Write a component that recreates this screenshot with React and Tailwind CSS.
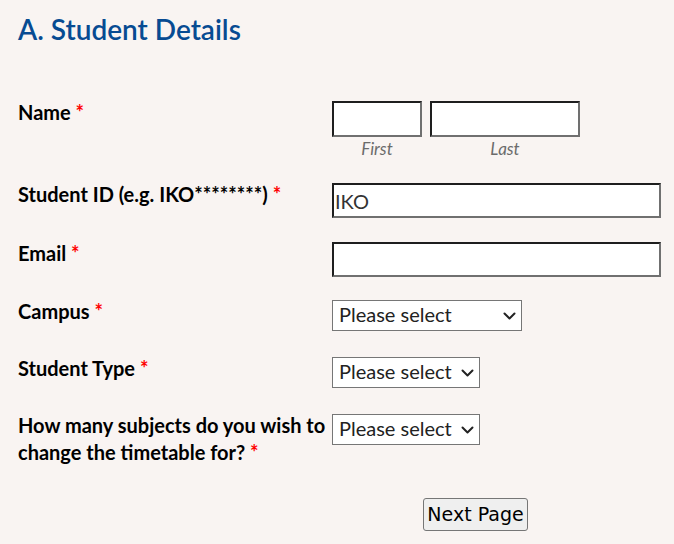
import React from "react";

const font = { fontFamily: "Lato, 'Noto Sans', sans-serif" };

function Req() {
  return <span className="text-[#ff0000] font-bold"> *</span>;
}

function Chevron() {
  return (
    <svg className="absolute right-[6px] top-1/2 -translate-y-1/2 pointer-events-none" width="13" height="8" viewBox="0 0 13 8">
      <path d="M1.5 1.5 L6.5 6.5 L11.5 1.5" fill="none" stroke="#222" strokeWidth="2" strokeLinecap="round" strokeLinejoin="round" />
    </svg>
  );
}

function Select({ w }) {
  return (
    <div className={`relative h-[31px] ${w}`}>
      <select className="appearance-none w-full h-full bg-white border border-[#767676] pl-[6px] pb-[3px] text-[20px] leading-[24px] text-[#222] outline-none">
        <option>Please select</option>
      </select>
      <Chevron />
    </div>
  );
}

const inputCls =
  "bg-white border-2 border-t-[#1e1e1e] border-l-[#1e1e1e] border-b-[#707070] border-r-[#707070] outline-none text-[20px] text-[#333] px-[1px]";

function Label({ children }) {
  return (
    <div className="w-[314px] shrink-0 font-bold text-[20px] leading-[27px] text-black -mt-[2px]">
      {children}
    </div>
  );
}

export default function App() {
  return (
    <div className="min-h-[544px] bg-[#f9f4f2] pl-[18px] pt-[12px]" style={font}>
      <h2 className="text-[28px] leading-[34px] font-semibold text-[#074b92]">A. Student Details</h2>

      <div className="mt-[55px] flex">
        <Label>
          Name<Req />
        </Label>
        <div className="flex gap-[8px]">
          <div className="flex flex-col items-center">
            <input className={`${inputCls} w-[90px] h-[36px]`} />
            <span className="italic text-[17px] leading-[24px] text-[#6b6b6b]">First</span>
          </div>
          <div className="flex flex-col items-center">
            <input className={`${inputCls} w-[150px] h-[36px]`} />
            <span className="italic text-[17px] leading-[24px] text-[#6b6b6b]">Last</span>
          </div>
        </div>
      </div>

      <div className="mt-[22px] flex">
        <Label>
          Student ID (e.g. IKO********)<Req />
        </Label>
        <input className={`${inputCls} w-[329px] h-[35px]`} defaultValue="IKO" />
      </div>

      <div className="mt-[24px] flex">
        <Label>
          Email<Req />
        </Label>
        <input className={`${inputCls} w-[329px] h-[35px]`} />
      </div>

      <div className="mt-[23px] flex">
        <Label>
          Campus<Req />
        </Label>
        <Select w="w-[190px]" />
      </div>

      <div className="mt-[26px] flex">
        <Label>
          Student Type<Req />
        </Label>
        <Select w="w-[148px]" />
      </div>

      <div className="mt-[26px] flex">
        <Label>
          How many subjects do you wish to change the timetable for?<Req />
        </Label>
        <Select w="w-[148px]" />
      </div>

      <div className="mt-[32px] pl-[405px]">
        <button
          className="w-[105px] h-[33px] bg-[#efefef] border border-[#767676] rounded-[3px] text-[19px] text-black leading-none"
          style={{ fontFamily: "'DejaVu Sans', sans-serif" }}
        >
          Next Page
        </button>
      </div>
    </div>
  );
}
